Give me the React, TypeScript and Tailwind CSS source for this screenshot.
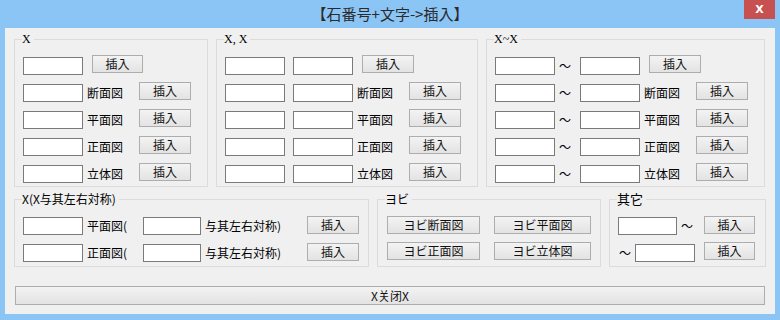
import React from "react";

const cjk = "font-['Noto_Sans_CJK_JP','Noto_Sans_CJK_SC',sans-serif]";

function Input({ w = "w-[60px]" }: { w?: string }) {
  return <div className={`${w} h-[18px] shrink-0 border border-[#7a7a7a] bg-white`} />;
}

function Btn({ children, w = "w-[52px]", up = "-mt-[2px]" }: { children: React.ReactNode; w?: string; up?: string }) {
  return (
    <button
      className={`${w} ${up} h-[18px] shrink-0 border border-[#adadad] bg-linear-to-b from-[#f3f3f3] to-[#e3e3e3] text-[12px] leading-[16px] text-[#111] text-center`}
    >
      {children}
    </button>
  );
}

function Label({ children, w }: { children: React.ReactNode; w: string }) {
  return <span className={`${w} shrink-0 pl-[4px] text-[12px] leading-[18px] text-black whitespace-nowrap`}>{children}</span>;
}

function Group({
  title,
  className,
  children,
  titleClass = "font-['Liberation_Serif','Noto_Sans_CJK_JP',serif] text-[12px]",
}: {
  title: string;
  className: string;
  children: React.ReactNode;
  titleClass?: string;
}) {
  return (
    <div className={`relative shrink-0 border border-[#dcdcdc] ${className}`}>
      <span className={`absolute -top-[8px] left-[7px] bg-[#f0f0f0] pr-[3px] leading-[14px] text-black ${titleClass}`}>
        {title}
      </span>
      {children}
    </div>
  );
}

const views = ["断面図", "平面図", "正面図", "立体図"];

export default function App() {
  return (
    <div className={`w-[780px] h-[320px] bg-[#8bc5f6] flex flex-col ${cjk}`}>
      {/* title bar */}
      <div className="relative h-[28px] flex items-center justify-center">
        <span className="text-[15px] text-[#2b2b2b] pt-[1px]">【石番号+文字-&gt;插入】</span>
        <div className="absolute top-0 right-[5px] w-[31px] h-[19px] bg-[#c75050] flex items-center justify-center">
          <span className="font-['DejaVu_Sans',sans-serif] text-[11px] font-bold text-white leading-none">X</span>
        </div>
      </div>

      {/* body */}
      <div className="mx-[5px] h-[286px] bg-[#f0f0f0] pt-[11px] pl-[9px] pr-[10px] flex flex-col">
        <div className="flex">
          {/* X */}
          <Group title="X" className="w-[194px] h-[148px] pt-[17px] pl-[8px]">
            <div className="flex flex-col gap-[9px]">
              <div className="flex items-start h-[18px]">
                <Input />
                <div className="w-[9px]" />
                <Btn w="w-[51px]">插入</Btn>
              </div>
              {views.map((v) => (
                <div key={v} className="flex items-start h-[18px]">
                  <Input />
                  <Label w="w-[56px]">{v}</Label>
                  <Btn>插入</Btn>
                </div>
              ))}
            </div>
          </Group>

          {/* X, X */}
          <Group title="X, X" className="ml-[8px] w-[262px] h-[148px] pt-[17px] pl-[8px]">
            <div className="flex flex-col gap-[9px]">
              <div className="flex items-start h-[18px]">
                <Input />
                <div className="w-[8px]" />
                <Input />
                <div className="w-[9px]" />
                <Btn>插入</Btn>
              </div>
              {views.map((v) => (
                <div key={v} className="flex items-start h-[18px]">
                  <Input />
                  <div className="w-[8px]" />
                  <Input />
                  <Label w="w-[56px]">{v}</Label>
                  <Btn>插入</Btn>
                </div>
              ))}
            </div>
          </Group>

          {/* X~X */}
          <Group title="X~X" className="ml-[8px] w-[279px] h-[148px] pt-[17px] pl-[8px]">
            <div className="flex flex-col gap-[9px]">
              <div className="flex items-start h-[18px]">
                <Input />
                <Label w="w-[25px]">～</Label>
                <Input />
                <div className="w-[9px]" />
                <Btn>插入</Btn>
              </div>
              {views.map((v) => (
                <div key={v} className="flex items-start h-[18px]">
                  <Input />
                  <Label w="w-[25px]">～</Label>
                  <Input />
                  <Label w="w-[56px]">{v}</Label>
                  <Btn>插入</Btn>
                </div>
              ))}
            </div>
          </Group>
        </div>

        <div className="flex mt-[12px]">
          {/* X(X与其左右対称) */}
          <Group
            title="X(X与其左右対称)"
            titleClass="text-[12px]"
            className="w-[355px] h-[68px] pt-[17px] pl-[8px]"
          >
            <div className="flex flex-col gap-[9px]">
              {["平面図(", "正面図("].map((v) => (
                <div key={v} className="flex items-start h-[18px]">
                  <Input />
                  <Label w="w-[60px]">{v}</Label>
                  <Input w="w-[58px]" />
                  <Label w="w-[106px]">与其左右対称)</Label>
                  <Btn up="-mt-[1px]">插入</Btn>
                </div>
              ))}
            </div>
          </Group>

          {/* ヨビ */}
          <Group title="ヨビ" titleClass="text-[12px]" className="ml-[8px] w-[224px] h-[68px] pt-[16px] pl-[9px]">
            <div className="flex flex-col gap-[8px]">
              <div className="flex gap-[14px]">
                <Btn w="w-[93px]" up="">ヨビ断面図</Btn>
                <Btn w="w-[97px]" up="">ヨビ平面図</Btn>
              </div>
              <div className="flex gap-[14px]">
                <Btn w="w-[93px]" up="">ヨビ正面図</Btn>
                <Btn w="w-[97px]" up="">ヨビ立体図</Btn>
              </div>
            </div>
          </Group>

          {/* 其它 */}
          <Group title="其它" titleClass="text-[13px]" className="ml-[8px] w-[157px] h-[68px] pt-[17px] pl-[5px]">
            <div className="flex flex-col gap-[9px]">
              <div className="flex items-start h-[18px]">
                <div className="w-[3px]" />
                <Input w="w-[59px]" />
                <Label w="w-[27px]">～</Label>
                <Btn w="w-[51px]" up="-mt-[1px]">插入</Btn>
              </div>
              <div className="flex items-start h-[18px]">
                <Label w="w-[20px]">～</Label>
                <Input />
                <div className="w-[9px]" />
                <Btn w="w-[51px]">插入</Btn>
              </div>
            </div>
          </Group>
        </div>

        <button className="mt-[19px] ml-[1px] w-[750px] h-[19px] border border-[#adadad] bg-linear-to-b from-[#f3f3f3] to-[#e3e3e3] text-[12px] leading-[17px] text-[#111]">
          X关闭X
        </button>
      </div>
    </div>
  );
}
